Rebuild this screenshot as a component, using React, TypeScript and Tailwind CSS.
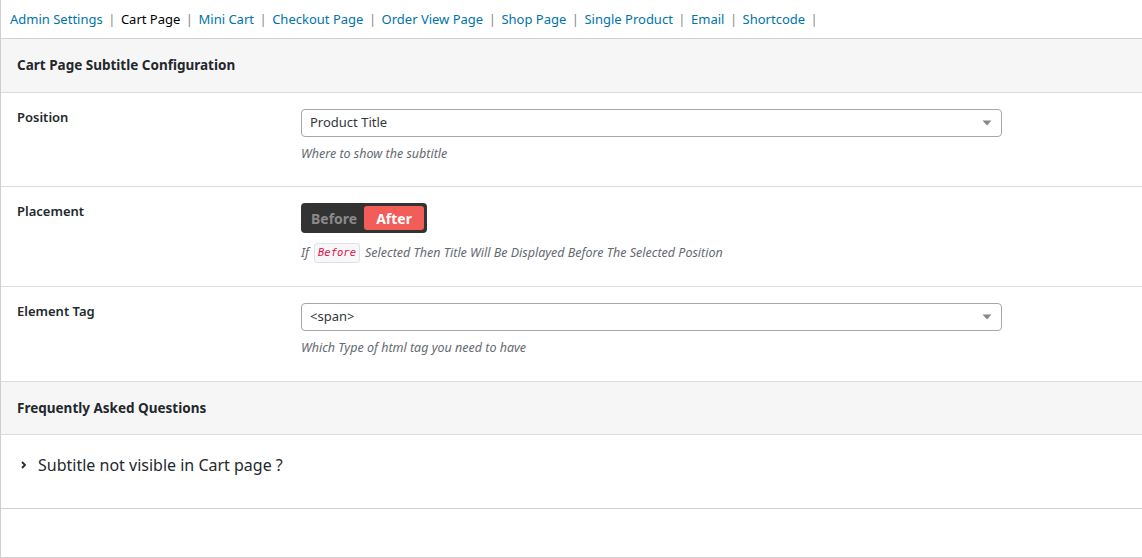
import React from 'react';

const tabs = [
  'Admin Settings',
  'Cart Page',
  'Mini Cart',
  'Checkout Page',
  'Order View Page',
  'Shop Page',
  'Single Product',
  'Email',
  'Shortcode',
];

const SelectBox: React.FC<{ value: string }> = ({ value }) => (
  <div className="w-[701px] h-[28px] flex items-center justify-between border border-[#a7a7a7] rounded-[4px] bg-white pl-[8px] pr-[9px] text-[13px] text-[#32373c]">
    <span>{value}</span>
    <svg width="10" height="6" viewBox="0 0 10 6">
      <path d="M0.5 0.5 L9.5 0.5 L5 5.5 Z" fill="#888" />
    </svg>
  </div>
);

const Row: React.FC<{ label: string; children: React.ReactNode; h: string }> = ({ label, children, h }) => (
  <div className={`flex border-b border-[#dcdcdc] ${h}`}>
    <div className="w-[300px] pl-[16px] pt-[15px] text-[13px] font-semibold text-[#23282d]">{label}</div>
    <div className="flex-1 pt-[16px]">{children}</div>
  </div>
);

export default function App() {
  return (
    <div className="h-[558px] bg-white border-l border-[#cfcfcf] font-['Noto_Sans',sans-serif] text-[#23282d]">
      {/* tabs */}
      <div className="h-[39px] flex items-center pl-[9px] pt-[2px] border-b border-[#d2d2d2] text-[13px]">
        {tabs.map((t) => (
          <span key={t} className="flex items-center">
            <span className={t === 'Cart Page' ? 'text-black' : 'text-[#0073aa]'}>{t}</span>
            <span className="mx-[5.5px] text-[#8a8a8a]">|</span>
          </span>
        ))}
      </div>

      {/* header */}
      <div className="h-[54px] flex items-center pl-[16px] bg-[#f6f6f6] border-b border-[#dcdcdc] text-[13.5px] font-bold">
        Cart Page Subtitle Configuration
      </div>

      <Row label="Position" h="h-[94px]">
        <SelectBox value="Product Title" />
        <p className="mt-[8px] text-[12.5px] italic text-[#646970]">Where to show the subtitle</p>
      </Row>

      <Row label="Placement" h="h-[100px]">
        <div className="inline-flex items-center h-[30px] bg-[#333] rounded-[4px] p-[3px] text-[14px] font-bold">
          <span className="pl-[7px] pr-[7px] text-[#8a8a8a]">Before</span>
          <span className="h-[24px] flex items-center px-[12px] bg-[#f25d59] rounded-[3px] text-white">After</span>
        </div>
        <p className="mt-[10px] text-[12.5px] italic text-[#646970] flex items-center">
          If
          <code className="mx-[5px] px-[3px] py-[1px] bg-[#f7f7f9] border border-[#e1e1e8] rounded-[3px] font-['DejaVu_Sans_Mono',monospace] text-[10.5px] text-[#dd1144]">
            Before
          </code>
          Selected Then Title Will Be Displayed Before The Selected Position
        </p>
      </Row>

      <Row label="Element Tag" h="h-[95px]">
        <SelectBox value="<span>" />
        <p className="mt-[8px] text-[12.5px] italic text-[#646970]">Which Type of html tag you need to have</p>
      </Row>

      <div className="h-[53px] flex items-center pl-[16px] bg-[#f6f6f6] border-b border-[#dcdcdc] text-[13.5px] font-bold">
        Frequently Asked Questions
      </div>

      <div className="h-[74px] border-b border-[#cfcfcf] flex items-start pt-[18px] pl-[18px] text-[16px] text-[#23282d]">
        <svg width="10" height="10" viewBox="0 0 10 10" className="mt-[7px] mr-[9px]">
          <path d="M3 2 L6 5 L3 8" stroke="#23282d" strokeWidth="1.8" fill="none" />
        </svg>
        Subtitle not visible in Cart page ?
      </div>

      <div className="h-[49px] border-b border-[#cfcfcf]" />
    </div>
  );
}
